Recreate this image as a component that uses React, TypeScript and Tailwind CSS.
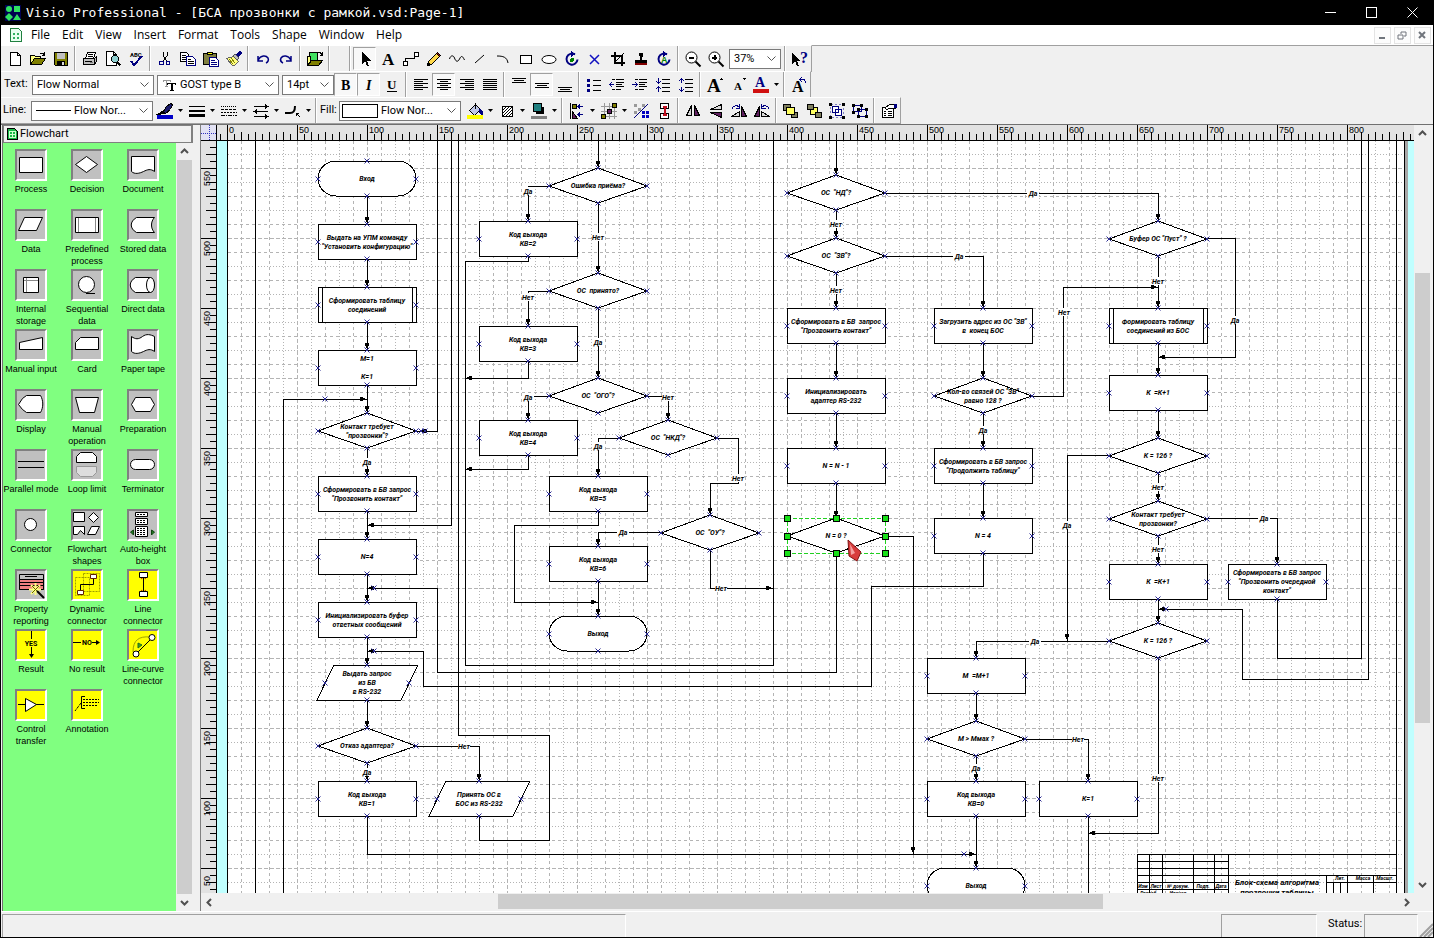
import type { ReactNode } from 'react'
import clsx from 'clsx'

type Shape = 'rect' | 'decision' | 'terminator' | 'predefined' | 'data'

interface FlowNode {
  shape: Shape
  cx: number
  y: number
  text: string[]
}

interface Edge {
  points: string
  arrow?: boolean
}

interface IconProps {
  children: ReactNode
  size?: number
}

const NODE_W = 98
const NODE_H = 35

const nodes: FlowNode[] = [
  { shape: 'terminator', cx: 367, y: 161, text: ['Вход'] },
  { shape: 'rect', cx: 367, y: 224, text: ['Выдать на УПМ команду', '"Установить конфигурацию"'] },
  { shape: 'predefined', cx: 367, y: 287, text: ['Сформировать таблицу', 'соединений'] },
  { shape: 'rect', cx: 367, y: 350, text: ['М=1', '', 'К=1'] },
  { shape: 'decision', cx: 367, y: 413, text: ['Контакт требует', '"прозвонки"?'] },
  { shape: 'rect', cx: 367, y: 476, text: ['Сформировать в БВ запрос', '"Прозвонить контакт"'] },
  { shape: 'rect', cx: 367, y: 539, text: ['N=4'] },
  { shape: 'rect', cx: 367, y: 602, text: ['Инициализировать буфер', 'ответных сообщений'] },
  { shape: 'data', cx: 367, y: 665, text: ['Выдать запрос', 'из БВ', 'в RS-232'] },
  { shape: 'decision', cx: 367, y: 728, text: ['Отказ адаптера?'] },
  { shape: 'rect', cx: 367, y: 781, text: ['Код выхода', 'КВ=1'] },
  { shape: 'data', cx: 479, y: 781, text: ['Принять ОС в', 'БОС из RS-232'] },
  { shape: 'rect', cx: 528, y: 221, text: ['Код выхода', 'КВ=2'] },
  { shape: 'rect', cx: 528, y: 326, text: ['Код выхода', 'КВ=3'] },
  { shape: 'rect', cx: 528, y: 420, text: ['Код выхода', 'КВ=4'] },
  { shape: 'decision', cx: 598, y: 168, text: ['Ошибка приёма?'] },
  { shape: 'decision', cx: 598, y: 273, text: ['ОС  принято?'] },
  { shape: 'decision', cx: 598, y: 378, text: ['ОС  "ОГО"?'] },
  { shape: 'decision', cx: 668, y: 420, text: ['ОС  "НКД"?'] },
  { shape: 'decision', cx: 710, y: 515, text: ['ОС  "ОУ"?'] },
  { shape: 'rect', cx: 598, y: 476, text: ['Код выхода', 'КВ=5'] },
  { shape: 'rect', cx: 598, y: 546, text: ['Код выхода', 'КВ=6'] },
  { shape: 'terminator', cx: 598, y: 616, text: ['Выход'] },
  { shape: 'decision', cx: 836, y: 175, text: ['ОС  "НД"?'] },
  { shape: 'decision', cx: 836, y: 238, text: ['ОС  "ЗВ"?'] },
  { shape: 'rect', cx: 836, y: 308, text: ['Сформировать в БВ  запрос', '"Прозвонить контакт"'] },
  { shape: 'rect', cx: 836, y: 378, text: ['Инициализировать', 'адаптер RS-232'] },
  { shape: 'rect', cx: 836, y: 448, text: ['N = N - 1'] },
  { shape: 'decision', cx: 836, y: 518, text: ['N = 0 ?'] },
  { shape: 'rect', cx: 983, y: 308, text: ['Загрузить адрес из ОС "ЗВ"', 'в  конец БОС'] },
  { shape: 'decision', cx: 983, y: 378, text: ['Кол-во связей ОС "ЗВ"', 'равно 128 ?'] },
  { shape: 'rect', cx: 983, y: 448, text: ['Сформировать в БВ запрос', '"Продолжить таблицу"'] },
  { shape: 'rect', cx: 983, y: 518, text: ['N = 4'] },
  { shape: 'rect', cx: 976, y: 658, text: ['М  =М+1'] },
  { shape: 'decision', cx: 976, y: 721, text: ['М > Ммах ?'] },
  { shape: 'rect', cx: 976, y: 781, text: ['Код выхода', 'КВ=0'] },
  { shape: 'terminator', cx: 976, y: 868, text: ['Выход'] },
  { shape: 'rect', cx: 1088, y: 781, text: ['К=1'] },
  { shape: 'decision', cx: 1158, y: 221, text: ['Буфер ОС "Пуст" ?'] },
  { shape: 'predefined', cx: 1158, y: 308, text: ['Формировать таблицу', 'соединений из БОС'] },
  { shape: 'rect', cx: 1158, y: 375, text: ['К  =К+1'] },
  { shape: 'decision', cx: 1158, y: 438, text: ['К = 126 ?'] },
  { shape: 'decision', cx: 1158, y: 501, text: ['Контакт требует', 'прозвонки?'] },
  { shape: 'rect', cx: 1158, y: 564, text: ['К  =К+1'] },
  { shape: 'decision', cx: 1158, y: 623, text: ['К = 126 ?'] },
  { shape: 'rect', cx: 1277, y: 564, text: ['Сформировать в БВ запрос', '"Прозвонить очередной', 'контакт"'] },
]

const edges: Edge[] = [
  { points: '367,196 367,224', arrow: true },
  { points: '367,259 367,287', arrow: true },
  { points: '367,322 367,350', arrow: true },
  { points: '367,385 367,413', arrow: true },
  { points: '367,448 367,476', arrow: true },
  { points: '367,511 367,539', arrow: true },
  { points: '367,574 367,602', arrow: true },
  { points: '367,637 367,665', arrow: true },
  { points: '367,700 367,728', arrow: true },
  { points: '367,763 367,781', arrow: true },
  { points: '283,900 283,399 367,399', arrow: true },
  { points: '437,130 437,431 420,431', arrow: true },
  { points: '424,431 416,431' },
  { points: '451,130 451,525 367,525', arrow: true },
  { points: '458,130 458,735 549,735 549,840 479,840 479,816' },
  { points: '528,256 528,261 465,261 465,665 773,665 773,130' },
  { points: '528,361 528,378 465,378', arrow: true },
  { points: '528,455 528,469 465,469', arrow: true },
  { points: '836,553 836,672 437,672 437,588 367,588', arrow: true },
  { points: '983,553 983,586 871,586 871,686 423,686 423,651 367,651', arrow: true },
  { points: '598,130 598,168', arrow: true },
  { points: '549,186 528,186 528,221', arrow: true },
  { points: '598,203 598,273', arrow: true },
  { points: '549,291 528,291 528,326', arrow: true },
  { points: '598,308 598,378', arrow: true },
  { points: '549,396 528,396 528,420', arrow: true },
  { points: '647,396 668,396 668,420', arrow: true },
  { points: '619,438 598,438 598,476', arrow: true },
  { points: '717,438 738,438 738,483 710,483 710,515', arrow: true },
  { points: '661,532 598,532 598,546', arrow: true },
  { points: '710,550 710,588 773,588', arrow: true },
  { points: '598,511 598,525 514,525 514,602 598,602', arrow: true },
  { points: '598,581 598,616', arrow: true },
  { points: '416,746 479,746 479,781', arrow: true },
  { points: '367,816 367,854 976,854', arrow: true },
  { points: '836,130 836,175', arrow: true },
  { points: '885,193 1158,193 1158,221', arrow: true },
  { points: '836,210 836,238', arrow: true },
  { points: '885,256 983,256 983,308', arrow: true },
  { points: '836,273 836,308', arrow: true },
  { points: '836,343 836,378', arrow: true },
  { points: '836,413 836,448', arrow: true },
  { points: '836,483 836,518', arrow: true },
  { points: '885,536 913,536 913,854', arrow: true },
  { points: '983,343 983,378', arrow: true },
  { points: '983,413 983,448', arrow: true },
  { points: '983,483 983,518', arrow: true },
  { points: '1032,396 1063,396 1063,287 1158,287', arrow: true },
  { points: '1158,256 1158,308', arrow: true },
  { points: '1207,238 1235,238 1235,357 1158,357', arrow: true },
  { points: '1158,343 1158,375', arrow: true },
  { points: '1158,410 1158,438', arrow: true },
  { points: '1158,473 1158,501', arrow: true },
  { points: '1109,455 1067,455 1067,641', arrow: true },
  { points: '1207,518 1277,518 1277,564', arrow: true },
  { points: '1158,536 1158,564', arrow: true },
  { points: '1158,599 1158,623', arrow: true },
  { points: '1109,641 976,641 976,658', arrow: true },
  { points: '1277,599 1277,658 1361,658 1361,130' },
  { points: '1368,130 1368,679 1242,679 1242,609 1158,609', arrow: true },
  { points: '1158,658 1158,833 1088,833', arrow: true },
  { points: '976,693 976,721', arrow: true },
  { points: '1025,739 1088,739 1088,781', arrow: true },
  { points: '976,756 976,781', arrow: true },
  { points: '976,816 976,868', arrow: true },
  { points: '1088,816 1088,900' },
]

const labels: [string, number, number][] = [
  ['Да', 367, 462], ['Да', 367, 772], ['Да', 528, 191], ['Нет', 598, 237], ['Нет', 528, 297],
  ['Да', 598, 342], ['Да', 528, 397], ['Нет', 668, 397], ['Да', 598, 446], ['Нет', 738, 478],
  ['Да', 623, 532], ['Нет', 721, 588], ['Нет', 464, 746], ['Да', 1033, 193], ['Нет', 836, 224],
  ['Да', 959, 256], ['Нет', 836, 290], ['Да', 983, 430], ['Нет', 1064, 312], ['Нет', 1158, 281],
  ['Да', 1235, 320], ['Нет', 1158, 487], ['Да', 1067, 525], ['Да', 1264, 518], ['Нет', 1158, 549],
  ['Да', 1035, 641], ['Нет', 1158, 778], ['Нет', 1078, 739], ['Да', 976, 768],
]

const looseGlue: [number, number][] = [
  [325, 399], [421, 431], [425, 431], [374, 588], [374, 651], [964, 854], [1166, 609],
]

function range(from: number, to: number, step: number) {
  const out: number[] = []
  for (let n = from; n <= to; n += step) out.push(n)
  return out
}

// 1 mm on the page is 1.4 px at 37%
const mmX = (mm: number) => Math.round(227 + mm * 1.4)
const mmY = (mm: number) => Math.round(168 + (550 - mm) * 1.4)

function gridDash(mm: number) {
  if (mm % 50 === 0) return '4 2'
  return mm % 20 === 0 ? '1 2' : '3 3'
}

function Icon({ children, size = 16 }: IconProps) {
  return (
    <svg
      width={size}
      height={size}
      viewBox={`0 0 ${size} ${size}`}
      fill="none"
      stroke="#000"
      shapeRendering="crispEdges"
      className="shrink-0 overflow-visible"
      aria-hidden="true"
    >
      {children}
    </svg>
  )
}

function Tool({ label, pressed, children }: { label: string; pressed?: boolean; children: ReactNode }) {
  return (
    <button
      type="button"
      aria-label={label}
      className={clsx(
        'flex h-[23px] w-[23px] shrink-0 items-center justify-center',
        pressed && 'border border-r-white border-b-white border-t-[#a0a0a0] border-l-[#a0a0a0] bg-[#f8f8f8]',
      )}
    >
      <Icon>{children}</Icon>
    </button>
  )
}

function DropTool({ label, children }: { label: string; children: ReactNode }) {
  return (
    <div className="flex shrink-0 items-center">
      <Tool label={label}>{children}</Tool>
      <button type="button" aria-label={`${label} options`} className="flex h-[23px] w-[9px] items-center justify-center">
        <svg width="5" height="3" viewBox="0 0 5 3" aria-hidden="true">
          <path d="M0 0h5L2.5 3z" fill="#000" />
        </svg>
      </button>
    </div>
  )
}

function Sep() {
  return (
    <div className="flex h-full w-[6px] shrink-0 justify-center">
      <div className="w-[2px] border-l border-[#a0a0a0] border-r border-r-white" />
    </div>
  )
}

function Combo({ id, label, value, className, children }: {
  id: string
  label: string
  value: string
  className: string
  children?: ReactNode
}) {
  return (
    <div className={clsx('relative flex h-5 shrink-0 items-center border border-[#7a7a7a] bg-white pl-1', className)}>
      {children}
      <select
        id={id}
        aria-label={label}
        defaultValue={value}
        className="min-w-0 flex-1 appearance-none bg-transparent font-['Roboto',sans-serif] text-[11px] leading-4 outline-none"
      >
        <option>{value}</option>
      </select>
      <svg width="9" height="6" viewBox="0 0 9 6" className="mr-1 shrink-0" aria-hidden="true">
        <path d="M.5 .5L4.5 4.5L8.5 .5" fill="none" stroke="#555" />
      </svg>
    </div>
  )
}

function ToolRow({ children }: { children: ReactNode }) {
  return (
    <div className="flex h-[26px] w-fit shrink-0 items-center border-t border-r border-[#a0a0a0] border-t-white pl-[2px] shadow-[0_1px_0_#a0a0a0]">
      {children}
    </div>
  )
}

function StandardRow() {
  return (
    <ToolRow>
      <Tool label="New"><path d="M3.5 1.5h7l3 3v10h-10zM10.500 1.500v3h3" fill="#fff" /></Tool>
      <Tool label="Open">
        <path d="M.5 13.500v-9h4l1 1h5v2" fill="#ffff80" />
        <path d="M.5 13.500l4-6h11l-4 6z" fill="#808000" />
        <path d="M9.500 3.500c1-2 3-2 4.500 0M14.500 1v3h-3" />
      </Tool>
      <Tool label="Save">
        <path d="M1.500 1.500h13v13h-12l-1-1z" fill="#808000" />
        <path d="M4 2h8v6H4z" fill="#c0c0c0" stroke="none" />
        <path d="M4 10h8v4H4z" fill="#000" stroke="none" />
        <path d="M9 11h2v3H9z" fill="#ddd" stroke="none" />
      </Tool>
      <Sep />
      <Tool label="Print">
        <path d="M5.500 1.500h8l-2 6h-8z" fill="#fff" />
        <path d="M1.500 7.500h11v6h-11zM12.500 7.500l2-2v5l-2 3" fill="#c0c0c0" />
        <path d="M6 3.500h5M5.500 5.500h5M3 10.500h7" />
        <path d="M8 11h3v1H8z" fill="#777" stroke="none" />
      </Tool>
      <Tool label="Print preview">
        <path d="M1.500 .5h7l3 3v11h-10zM8.500 .5v3h3" fill="#fff" />
        <circle cx="10" cy="8" r="3.500" fill="#8fd0d0" />
        <path d="M12 11l3.500 3.500" strokeWidth="2" />
      </Tool>
      <Tool label="Spelling">
        <text x="2" y="6" className="fill-black stroke-none font-['Roboto'] text-[6px] font-bold">ABC</text>
        <path d="M3 10l3 4 8-9" stroke="#000080" strokeWidth="2" />
      </Tool>
      <Sep />
      <Tool label="Cut">
        <path d="M6 1v4l4 5M10 1v4l-4 5" />
        <circle cx="4.500" cy="12" r="2" stroke="#000080" />
        <circle cx="11" cy="12" r="2" stroke="#000080" />
      </Tool>
      <Tool label="Copy">
        <path d="M.5 1.500h6l2 2v7h-8z" fill="#fff" />
        <path d="M2 4.500h4M2 6.500h5M2 8.500h5" />
        <path d="M6.500 5.500h6l3 3v6h-9z" fill="#fff" stroke="#000080" />
        <path d="M8 8.500h3M8 10.500h6M8 12.500h6" />
      </Tool>
      <Tool label="Paste">
        <path d="M.5 2.500h13v11H.5z" fill="#808040" />
        <path d="M4.500 3.500v-2h5v2z" fill="#ff0" />
        <path d="M6.500 6.500h6l3 3v6h-9z" fill="#fff" stroke="#000080" />
        <path d="M8 9.500h4M8 11.500h6M8 13.500h6" stroke="#000080" />
      </Tool>
      <Tool label="Format painter">
        <path d="M.5 7.500l7-2 5 5-4 4h-2z" fill="#ffff80" stroke="#666" />
        <path d="M7 5l2-2 4 4-2 2z" fill="#c0c0c0" stroke="#555" />
        <path d="M11 5l4-4" stroke="#000080" strokeWidth="3" />
        <path d="M3 8l4 5M5 7l4 5" stroke="#808000" />
      </Tool>
      <Sep />
      <Tool label="Undo"><path d="M3 5v5h5M3 9c3-5 8-5 10-2 1 2 0 4-2 5" stroke="#000080" strokeWidth="1.500" shapeRendering="auto" /></Tool>
      <Tool label="Redo"><path d="M13 5v5H8M13 9c-3-5-8-5-10-2-1 2 0 4 2 5" stroke="#000080" strokeWidth="1.500" shapeRendering="auto" /></Tool>
      <Sep />
      <Tool label="Open stencil">
        <path d="M2.500 1.500h8v8h-8z" fill="#40e060" />
        <path d="M.5 14.500v-9h3v5z" fill="#ffff80" />
        <path d="M.5 14.500l4-5h11l-4 5z" fill="#808000" />
        <path d="M11 2c2-1 3 0 4 2M15.500 1v3h-3" />
      </Tool>
      <Sep />
      <div className="w-[15px]" />
      <Sep />
      <Tool label="Pointer" pressed><path d="M5 1v12l3-3 2 5h2l-2-5h4z" fill="#000" stroke="none" /></Tool>
      <Tool label="Text"><text x="2" y="14" className="fill-black stroke-none font-['Liberation_Serif'] text-[17px] font-bold">A</text></Tool>
      <Tool label="Connector">
        <path d="M.5 10.500h4v4h-4zM11.500 1.500h4v4h-4z" fill="#fff" />
        <path d="M2.500 10V7.500h9V3.500" />
      </Tool>
      <Tool label="Pencil">
        <path d="M1.500 14.500l1-4 8-8 3 3-8 8z" fill="#ffd84a" />
        <path d="M10.500 2.500l1-1 3 3-1 1z" fill="#a01010" />
        <path d="M1.500 14.500l1-3 2 2z" fill="#000" />
      </Tool>
      <Tool label="Freeform"><path d="M.5 8c1-4 4-4 5-1s3 5 5 1 3-3 5 1" shapeRendering="auto" /></Tool>
      <Tool label="Line"><path d="M3 12L12 4" shapeRendering="auto" /></Tool>
      <Tool label="Arc"><path d="M2 5c6 0 10 1 11 7" shapeRendering="auto" /></Tool>
      <Tool label="Rectangle"><path d="M2.500 4.500h11v8h-11z" fill="#fff" /></Tool>
      <Tool label="Ellipse"><ellipse cx="8" cy="8.500" rx="7" ry="4" fill="#fff" shapeRendering="auto" /></Tool>
      <Tool label="Rotate">
        <path d="M11 3.500a5.500 5.500 0 1 0 2.500 5" stroke="#000080" strokeWidth="2" shapeRendering="auto" />
        <path d="M7 0l5 3-5 3z" fill="#000080" stroke="none" />
        <circle cx="8" cy="9" r="2" fill="#008000" stroke="none" />
      </Tool>
      <Tool label="Connection point"><path d="M3 4l9 9M12 4l-9 9" stroke="#1010c0" strokeWidth="1.500" shapeRendering="auto" /></Tool>
      <Tool label="Crop">
        <path d="M4.500 1v10.500H15M1 4.500h10.500V15" strokeWidth="2" />
        <path d="M6 10l8-8" />
      </Tool>
      <Tool label="Stamp">
        <path d="M6 2h4v3l-1 1v3h5v3H2V9h5V6L6 5z" fill="#000" stroke="none" />
        <path d="M2 12h12v2H2z" fill="#800000" stroke="none" />
      </Tool>
      <Tool label="Rotate text">
        <path d="M11 3.500a5.500 5.500 0 1 0 2.500 5" stroke="#000080" strokeWidth="2" shapeRendering="auto" />
        <path d="M7 0l5 3-5 3z" fill="#000080" stroke="none" />
        <text x="5" y="12" className="fill-[#008000] stroke-none font-['Liberation_Sans'] text-[9px] font-bold">A</text>
      </Tool>
      <Sep />
      <Tool label="Zoom out">
        <circle cx="6.500" cy="6.500" r="5.500" fill="#fff" shapeRendering="auto" />
        <path d="M4 6.500h5" strokeWidth="2" />
        <path d="M10.500 10.500l5 5" strokeWidth="2" shapeRendering="auto" />
      </Tool>
      <Tool label="Zoom in">
        <circle cx="6.500" cy="6.500" r="5.500" fill="#fff" shapeRendering="auto" />
        <path d="M4 6.500h5M6.500 4v5" strokeWidth="2" />
        <path d="M10.500 10.500l5 5" strokeWidth="2" shapeRendering="auto" />
      </Tool>
      <Combo id="zoom" label="Zoom" value="37%" className="mr-px ml-[2px] w-[52px]" />
      <Sep />
      <Tool label="Help">
        <path d="M0 1v12l3-3 2 5h2l-2-5h3z" fill="#000" stroke="none" />
        <text x="8" y="12" className="fill-[#000080] stroke-none font-['Liberation_Serif'] text-[16px] font-bold">?</text>
      </Tool>
    </ToolRow>
  )
}

function TextRow() {
  return (
    <ToolRow>
      <label htmlFor="text-style" className="w-[29px] pl-px text-[11px]">Text:</label>
      <Combo id="text-style" label="Text style" value="Flow Normal" className="w-[122px]" />
      <Combo id="font" label="Font" value="GOST type B" className="ml-[3px] w-[122px]">
        <svg width="14" height="12" viewBox="0 0 14 12" className="mr-1 shrink-0" shapeRendering="crispEdges" aria-hidden="true">
          <path d="M1.500 3V1.500h7V3M4.500 1v6M3 7.500h3" stroke="#999" fill="none" />
          <path d="M5.500 6V4.500h8V6M8 11.500h4" stroke="#000" fill="none" />
          <path d="M9 4h2v7H9z" />
        </svg>
      </Combo>
      <Combo id="size" label="Font size" value="14pt" className="ml-[3px] w-[52px]" />
      <Tool label="Bold" pressed><text x="3" y="13" className="fill-black stroke-none font-['Liberation_Serif'] text-[14px] font-bold">B</text></Tool>
      <Tool label="Italic" pressed><text x="5" y="13" className="fill-black stroke-none font-['Liberation_Serif'] text-[14px] font-bold italic">I</text></Tool>
      <Tool label="Underline">
        <text x="3" y="12" className="fill-black stroke-none font-['Liberation_Serif'] text-[13px] font-bold">U</text>
        <path d="M3 14.500h10" />
      </Tool>
      <Sep />
      <Tool label="Align left"><path d="M1 2.500h14M1 4.500h9M1 6.500h14M1 8.500h9M1 10.500h14M1 12.500h9" /></Tool>
      <Tool label="Align centre" pressed><path d="M1 2.500h14M4 4.500h8M1 6.500h14M4 8.500h8M1 10.500h14M4 12.500h8" /></Tool>
      <Tool label="Align right"><path d="M1 2.500h14M6 4.500h9M1 6.500h14M6 8.500h9M1 10.500h14M6 12.500h9" /></Tool>
      <Tool label="Justify"><path d="M1 2.500h14M1 4.500h14M1 6.500h14M1 8.500h14M1 10.500h14M1 12.500h14" /></Tool>
      <Sep />
      <Tool label="Align top"><path d="M1 1.500h14M3 3.500h10M1 5.500h14" /></Tool>
      <Tool label="Align middle" pressed><path d="M1 6.500h14M3 8.500h10M1 10.500h14" /></Tool>
      <Tool label="Align bottom"><path d="M1 10.500h14M3 12.500h10M1 14.500h14" /></Tool>
      <Sep />
      <Tool label="Bullets">
        <path d="M1 2h3v3H1zM1 7h3v3H1zM1 12h3v3H1z" fill="#000080" stroke="none" />
        <path d="M7 3.500h8M7 8.500h8M7 13.500h8" />
      </Tool>
      <Tool label="Decrease indent">
        <path d="M0 7.500h5M3 5L.5 7.500 3 10" stroke="#000080" />
        <path d="M7 2.500h8M7 5.500h8M7 7.500h6M7 9.500h8M7 12.500h5M3 2.500h3M3 12.500h3" />
      </Tool>
      <Tool label="Increase indent">
        <path d="M0 7.500h5M3 5l2.500 2.500L3 10" stroke="#000080" />
        <path d="M7 2.500h8M7 5.500h8M7 7.500h6M7 9.500h8M7 12.500h5M3 2.500h3M3 12.500h3" />
      </Tool>
      <Tool label="Decrease spacing">
        <path d="M3.500 1v5M1 4l2.500 2.500L6 4M3.500 15v-5M1 12l2.500-2.500L6 12" stroke="#000080" />
        <path d="M7 2.500h8M7 6.500h8M7 10.500h8M7 14.500h8" />
      </Tool>
      <Tool label="Increase spacing">
        <path d="M3.500 1v5M1 4l2.500-2.500L6 4M3.500 15v-5M1 12l2.500 2.500L6 12" stroke="#000080" />
        <path d="M7 2.500h8M7 6.500h8M7 10.500h8M7 14.500h8" />
      </Tool>
      <Sep />
      <Tool label="Larger text">
        <text x="0" y="15" className="fill-black stroke-none font-['Liberation_Serif'] text-[19px] font-bold">A</text>
        <path d="M12 3l2-2 2 2z" fill="#000" stroke="none" />
      </Tool>
      <Tool label="Smaller text">
        <text x="4" y="13" className="fill-black stroke-none font-['Liberation_Serif'] text-[11px] font-bold">A</text>
        <path d="M12 1h4l-2 2z" fill="#000" stroke="none" />
      </Tool>
      <DropTool label="Text colour">
        <text x="2" y="10" className="fill-[#000080] stroke-none font-['Liberation_Serif'] text-[14px] font-bold">A</text>
        <path d="M0 12h16v4H0z" fill="#d01010" stroke="none" />
      </DropTool>
      <Sep />
      <Tool label="Rotate text left">
        <text x="1" y="15" className="fill-black stroke-none font-['Liberation_Serif'] text-[16px] font-bold">A</text>
        <path d="M9 2.500h4l2 3M11 0L8.500 2.500 11 5" stroke="#000080" />
      </Tool>
    </ToolRow>
  )
}

function ShapeRow() {
  return (
    <ToolRow>
      <label htmlFor="line-style" className="w-[28px] text-[11px]">Line:</label>
      <Combo id="line-style" label="Line style" value="Flow Nor..." className="w-[122px]">
        <div className="mr-[3px] h-px w-[35px] bg-black" />
      </Combo>
      <DropTool label="Line colour">
        <path d="M6.500 8.500l3-5 4-3 2 1-2 5-5 4z" fill="#1a1a6a" />
        <path d="M1 11l5-3 2 2-4 1z" fill="#000" />
        <path d="M0 12h16v4H0z" fill="#0000c8" stroke="none" />
      </DropTool>
      <DropTool label="Line weight">
        <path d="M0 3.500h16" />
        <path d="M0 7h16v2H0zM0 11h16v3H0z" fill="#000" stroke="none" />
      </DropTool>
      <DropTool label="Line pattern">
        <path d="M0 3.500h16" strokeDasharray="1 1" />
        <path d="M0 6.500h16" strokeDasharray="3 1" />
        <path d="M0 9.500h16" strokeDasharray="2 1" />
        <path d="M0 12.500h16" strokeDasharray="4 1 1 1" />
      </DropTool>
      <DropTool label="Line ends">
        <path d="M1 3.500h13M2 8.500h13M1 13.500h13" />
        <path d="M12 1l4 2.500L12 6zM4 6L0 8.500 4 11zM12 11l4 2.500-4 2.500z" fill="#000" stroke="none" />
      </DropTool>
      <DropTool label="Corner rounding">
        <path d="M0 10h5c3 0 5-1 5-7" strokeWidth="2" shapeRendering="auto" />
        <path d="M11 10l4 4M11 10v3M11 10h3" />
      </DropTool>
      <Sep />
      <label htmlFor="fill-style" className="w-[20px] pl-px text-[11px]">Fill:</label>
      <Combo id="fill-style" label="Fill style" value="Flow Nor..." className="w-[122px]">
        <div className="mr-[3px] -ml-[2px] h-[14px] w-[36px] border border-black bg-white" />
      </Combo>
      <div className="w-[2px]" />
      <DropTool label="Fill colour">
        <path d="M2.500 7.500l6-6 5 5-6 6z" fill="#c0c8e8" />
        <path d="M12 6c3 1 4 3 3 6l-3-4z" fill="#000080" stroke="#000080" />
        <path d="M8 6V0" />
        <path d="M0 12h16v4H0z" fill="#ffff00" stroke="none" />
      </DropTool>
      <DropTool label="Fill pattern">
        <path d="M3.500 3.500h10v10h-10z" fill="#fff" />
        <path d="M4 7l3-3M4 10l6-6M4 13l9-9M7 13l6-6M10 13l3-3" shapeRendering="auto" />
      </DropTool>
      <DropTool label="Shadow">
        <path d="M5 4h8v7H5z" fill="#000" stroke="none" />
        <path d="M2.500 .5h8v8h-8z" fill="#208080" />
        <path d="M0 13h16v3H0z" fill="#808080" stroke="none" />
      </DropTool>
      <Sep />
      <DropTool label="Align shapes">
        <path d="M1.500 0v16" />
        <path d="M3.500 1.500h4v4h-4z" fill="#808000" />
        <path d="M3 8l5 7H3z" fill="#602060" stroke="#000" />
        <path d="M9 3.500h5M9 11.500h5M11 1.500L9 3.500l2 2M11 9.500l-2 2 2 2" stroke="#000080" />
      </DropTool>
      <DropTool label="Distribute shapes">
        <path d="M3.500 0v16M8.500 0v16M13.500 0v16M0 3.500h16M0 8.500h16M0 13.500h16" stroke="#999" />
        <path d="M11.500 .5h4v4h-4zM.5 11.500h4v4h-4z" fill="#808000" />
        <path d="M6.500 6.500h4v4h-4z" fill="#602060" />
      </DropTool>
      <Tool label="Lay out shapes">
        <path d="M1 1h3v3H1zM5 5h3v3H5zM1 8h3v3H1zM9 1h3v3H9z" fill="#999" stroke="none" />
        <path d="M1 15L15 1" stroke="#000080" />
        <path d="M9 8h3v3H9zM13 8h3v3h-3zM9 12h3v3H9zM13 12h3v3h-3z" fill="#0000c0" stroke="none" />
      </Tool>
      <Tool label="Connect shapes">
        <path d="M4.500 .5h8v5h-8zM4.500 10.500h8v5h-8z" fill="#fff" />
        <path d="M8.500 4v8M6.500 4h4M6.500 12h4" stroke="#c01020" strokeWidth="2" />
      </Tool>
      <Sep />
      <Tool label="Flip horizontal">
        <path d="M6.500 2.500v10h-5z" fill="#d8d8d8" />
        <path d="M9.500 2.500v10h5z" fill="#602060" />
      </Tool>
      <Tool label="Flip vertical">
        <path d="M13.500 1.500v5h-11z" fill="#d8d8d8" />
        <path d="M13.500 14.500v-5h-11z" fill="#602060" />
      </Tool>
      <Tool label="Rotate right">
        <path d="M8.500 13.500h-8l8-5z" fill="#d8d8d8" />
        <path d="M10.500 3.500v10h5z" fill="#602060" />
        <path d="M1 6c1-4 5-4 7-2M8.500 1v4h-4" stroke="#000080" />
      </Tool>
      <Tool label="Rotate left">
        <path d="M7.500 13.500h8l-8-5z" fill="#d8d8d8" />
        <path d="M5.500 3.500v10h-5z" fill="#602060" />
        <path d="M15 6c-1-4-5-4-7-2M7.500 1v4h4" stroke="#000080" />
      </Tool>
      <Sep />
      <Tool label="Bring to front">
        <path d="M.5 1.500h7v6h-7zM8.500 9.500h6v5h-6z" fill="#808060" />
        <path d="M3.500 4.500h8v7h-8z" fill="#ffff60" />
      </Tool>
      <Tool label="Send to back">
        <path d="M4.500 4.500h7v7h-7z" fill="#ffff60" />
        <path d="M1.500 1.500h6v5h-6zM9.500 9.500h6v5h-6z" fill="#808060" />
      </Tool>
      <Tool label="Group">
        <path d="M3.500 3.500h6v6h-6zM6.500 6.500h6v6h-6z" fill="#fff" stroke="#000080" />
        <path d="M1.500 1.500h13v13h-13z" stroke="#8080c0" strokeDasharray="2 2" />
        <path d="M0 0h3v3H0zM13 0h3v3h-3zM0 13h3v3H0zM13 13h3v3h-3z" fill="#000" stroke="none" />
      </Tool>
      <Tool label="Ungroup">
        <path d="M1.500 2.500h8v6h-8zM6.500 6.500h8v7h-8z" stroke="#000080" />
        <path d="M0 1h3v3H0zM8 1h3v3H8zM0 8h3v3H0zM5 5h3v3H5zM13 5h3v3h-3zM5 12h3v3H5zM13 12h3v3h-3z" fill="#000" stroke="none" />
      </Tool>
      <Sep />
      <Tool label="Properties">
        <path d="M1.500 4.500h11v10h-11z" fill="#fff" />
        <path d="M3 8.500h2M7 8.500h4M3 10.500h2M7 10.500h4M3 12.500h2M7 12.500h4" />
        <path d="M4 5l4-3 6-1 1 4-4 1-3-1-2 2z" fill="#fff" />
        <path d="M13 1h3v4h-3z" fill="#000080" stroke="none" />
      </Tool>
    </ToolRow>
  )
}

const stencils: { name: string; tint?: 'yellow'; art: ReactNode }[] = [
  { name: 'Process', art: <path d="M4.500 8.500h23v15h-23z" /> },
  { name: 'Decision', art: <path d="M4.500 15.500l11-8 11 8-11 8z" /> },
  { name: 'Document', art: <path d="M4.500 7.500h23v15c-4-3-7-2-11 0s-9 3-12 0z" /> },
  { name: 'Data', art: <path d="M3.500 21.500l6-13h18l-6 13z" /> },
  { name: 'Predefined\nprocess', art: <><path d="M4.500 8.500h23v15h-23z" /><path d="M7.500 9v14M24.500 9v14" stroke="#888" /></> },
  { name: 'Stored data', art: <path d="M9.500 8.500h18c-4 4-4 11 0 15h-18c-7-4-7-11 0-15z" /> },
  { name: 'Internal\nstorage', art: <><path d="M8.500 8.500h15v15h-15z" /><path d="M11.500 9v14M9 11.500h14" stroke="#888" /></> },
  { name: 'Sequential\ndata', art: <><circle cx="15.500" cy="15.500" r="8" /><path d="M15 24.500h9" /></> },
  { name: 'Direct data', art: <><path d="M8.500 8.500h15c5 4 5 11 0 15h-15c-7-4-7-11 0-15z" /><ellipse cx="23.500" cy="16" rx="4" ry="7.500" /></> },
  { name: 'Manual input', art: <path d="M4.500 13.500l23-5v12h-23z" /> },
  { name: 'Card', art: <path d="M4.500 13.500l5-5h18v12h-23z" /> },
  { name: 'Paper tape', art: <path d="M4.500 7.500c4 3 7 3 11 0s8-2 12 0v15c-4-3-7-2-11 0s-9 3-12 0z" /> },
  { name: 'Display', art: <path d="M3.500 15.500l4-6 4-3h14c3 5 3 12 0 17h-14l-4-3z" /> },
  { name: 'Manual\noperation', art: <path d="M4.500 8.500h23l-4 15h-15z" /> },
  { name: 'Preparation', art: <path d="M4.500 15.500l4-7h15l4 7-4 7h-15z" /> },
  { name: 'Parallel mode', art: <path d="M3 12.500h26M3 18.500h26" /> },
  { name: 'Loop limit', art: <><path d="M5.500 13.500v-6l4-4h12l4 4v6z" /><path d="M5.500 17.500h20v6l-4 4h-12l-4-4z" fill="#ddd" stroke="#999" /></> },
  { name: 'Terminator', art: <rect x="3.500" y="10.500" width="24" height="10" rx="5" /> },
  { name: 'Connector', art: <circle cx="15.500" cy="15.500" r="6" /> },
  {
    name: 'Flowchart\nshapes',
    art: <><path d="M2.500 3.500h11v9h-11zM17.500 8.500l5-5 5 5-5 5zM2.500 17.500h11v8l-4-4-3 4h-4zM16.500 25.500l4-8h8l-4 8z" /></>,
  },
  {
    name: 'Auto-height\nbox',
    art: (
      <>
        <path d="M8.500 3.500h12v4h-12zM8.500 9.500h12v6h-12zM8.500 17.500h12v10h-12z" />
        <path d="M10 5.500h9M10 11.500h9M10 13.500h9M10 19.500h9M10 21.500h9M10 23.500h9M10 25.500h9" strokeDasharray="2 1" />
        <path d="M6.500 21v5l-3-3zM24.500 21v5l3-3z" fill="#208020" stroke="#104010" />
      </>
    ),
  },
  {
    name: 'Property\nreporting',
    art: (
      <>
        <path d="M4.500 5.500h24v15h-24z" fill="#c0c0c0" />
        <path d="M4.500 10.500h24v10h-24z" fill="#f08080" />
        <path d="M10 7.500h12M5 13.500h23M5 16.500h23" />
        <path d="M16 16l9 9M25 16l-9 9M20.500 14v12M14 20.500h12" stroke="#ffff80" strokeWidth="2" />
        <path d="M17 17l7 7M24 17l-7 7" stroke="#606000" />
        <path d="M22 22l7 7" strokeWidth="2" />
      </>
    ),
  },
  {
    name: 'Dynamic\nconnector',
    tint: 'yellow',
    art: (
      <>
        <path d="M4.500 8.500h14v18h-14zM12.500 4.500h16v18h-16z" fill="none" stroke="#a0a000" strokeDasharray="2 1" />
        <path d="M9.500 21v-5.500h13V10" fill="none" />
        <path d="M19.500 5.500h6v4h-6zM6.500 21.500h6v4h-6z" stroke="#602000" />
      </>
    ),
  },
  {
    name: 'Line\nconnector',
    tint: 'yellow',
    art: (
      <>
        <path d="M16.500 8v15" />
        <path d="M14 10l2.500-2 2.500 2M14 21l2.500 2 2.500-2" stroke="#c03000" fill="none" />
        <path d="M12.500 3.500h8v5h-8zM12.500 22.500h8v5h-8z" />
      </>
    ),
  },
  {
    name: 'Result',
    tint: 'yellow',
    art: (
      <>
        <path d="M16.500 2v8M16.500 18v8" />
        <path d="M14 25h5l-2.500 4z" fill="#000" stroke="none" />
        <text x="16" y="17" textAnchor="middle" className="fill-black stroke-none font-['Roboto'] text-[7px] font-bold">YES</text>
      </>
    ),
  },
  {
    name: 'No result',
    tint: 'yellow',
    art: (
      <>
        <path d="M2 13.500h8M21 13.500h5" />
        <path d="M25 11v5l4-2.500z" fill="#000" stroke="none" />
        <text x="16" y="16" textAnchor="middle" className="fill-black stroke-none font-['Roboto'] text-[7px] font-bold">NO</text>
      </>
    ),
  },
  {
    name: 'Line-curve\nconnector',
    tint: 'yellow',
    art: (
      <>
        <path d="M6 23c0-12 6-16 17-15" stroke="#a0a000" fill="none" />
        <path d="M11 14l4 2-4 3z" fill="#40a020" stroke="#207020" />
        <path d="M9 25L25 9" />
        <circle cx="25" cy="8.500" r="3" />
        <circle cx="9" cy="25" r="3" />
      </>
    ),
  },
  { name: 'Control\ntransfer', tint: 'yellow', art: <><path d="M3 15.500h26" /><path d="M10.500 9.500l11 6-11 7z" /></> },
  {
    name: 'Annotation',
    tint: 'yellow',
    art: (
      <>
        <path d="M14 7.500h-3.500v12H14" fill="none" />
        <path d="M10 14L4 22" fill="none" strokeDasharray="3 1" />
        <path d="M12 10.500h16M12 13.500h16M12 16.500h15" strokeDasharray="2 1" />
      </>
    ),
  },
]

function ScrollButton({ label, d }: { label: string; d: string }) {
  return (
    <button type="button" aria-label={label} className="flex h-[17px] w-[17px] shrink-0 items-center justify-center">
      <svg width="9" height="9" viewBox="0 0 9 9" fill="none" stroke="#505050" strokeWidth="2" aria-hidden="true">
        <path d={d} />
      </svg>
    </button>
  )
}

function StencilPanel() {
  return (
    <aside className="flex w-[191px] shrink-0 flex-col border-l border-[#707070]">
      <h2 className="flex h-[18px] shrink-0 items-center gap-[2px] border border-r-2 border-[#808080] pl-[3px] text-[11px] leading-4">
        <svg width="11" height="12" viewBox="0 0 11 12" shapeRendering="crispEdges" aria-hidden="true">
          <path d="M.5 .5h7l3 3v8H.5z" fill="#18b848" stroke="#000" />
          <path d="M2 6h7M5.500 3v7M2.500 3.500h6v6h-6z" fill="none" stroke="#d0ffd0" />
        </svg>
        Flowchart
      </h2>
      <div className="flex min-h-0 flex-1">
        <ul className="grid flex-1 auto-rows-[60px] grid-cols-[56px_56px_56px] content-start bg-[#80ff80] pt-[6px]">
          {stencils.map((s) => (
            <li key={s.name} className="flex flex-col items-center">
              <div
                className={clsx(
                  'h-8 w-8 shrink-0 border-2 border-t-[#808080] border-r-white border-b-white border-l-[#808080]',
                  s.tint === 'yellow' ? 'bg-[#ffff00]' : 'bg-[#c0c0c0]',
                )}
              >
                <svg width="32" height="32" viewBox="0 0 32 32" fill="#fff" stroke="#000" className="-mt-[2px] -ml-[2px]" aria-hidden="true">
                  {s.art}
                </svg>
              </div>
              <span className="mt-[2px] text-center font-['Liberation_Sans',Arial,sans-serif] text-[9px] leading-3 whitespace-pre">
                {s.name}
              </span>
            </li>
          ))}
        </ul>
        <div className="flex w-[17px] flex-col bg-[#f0f0f0]">
          <ScrollButton label="Scroll up" d="M1 6l3.500-3.500L8 6" />
          <div className="mx-px flex-1 bg-[#cdcdcd]" />
          <ScrollButton label="Scroll down" d="M1 3l3.500 3.500L8 3" />
        </div>
      </div>
    </aside>
  )
}

function TopRuler() {
  return (
    <svg className="h-4 min-w-0 flex-1 border-b border-black bg-[#e2e2e2]" shapeRendering="crispEdges" aria-hidden="true">
      <g transform="translate(-217 0)">
        {range(-5, 1200, 5).map((mm) => (
          <rect key={mm} x={mmX(mm)} y={mm % 50 === 0 ? 0 : mm % 10 === 0 ? 7 : 9} width="1" height="15" />
        ))}
        {range(0, 800, 50).map((mm) => (
          <text key={mm} x={mmX(mm) + 2} y="8" className="font-['Liberation_Sans'] text-[9px]">{mm}</text>
        ))}
      </g>
    </svg>
  )
}

function LeftRuler() {
  return (
    <svg className="h-full w-4 shrink-0 border-r border-black bg-[#e2e2e2]" shapeRendering="crispEdges" aria-hidden="true">
      <g transform="translate(0 -141)">
        {range(-300, 565, 5).map((mm) => (
          <rect key={mm} x={mm % 50 === 0 ? 0 : mm % 10 === 0 ? 5 : 9} y={mmY(mm)} width="16" height="1" />
        ))}
        {range(50, 550, 50).map((mm) => (
          <text
            key={mm}
            transform={`translate(9 ${mmY(mm) + 18}) rotate(-90)`}
            className="font-['Liberation_Sans'] text-[9px]"
          >
            {mm}
          </text>
        ))}
      </g>
    </svg>
  )
}

function Glue({ x, y }: { x: number; y: number }) {
  return <path d={`M${x - 2.5} ${y - 2.5}l5 5M${x + 2.5} ${y - 2.5}l-5 5`} className="stroke-[#2c2c94]" shapeRendering="auto" />
}

function outline({ shape, cx, y }: FlowNode) {
  const l = cx - NODE_W / 2
  const r = cx + NODE_W / 2
  const b = y + NODE_H
  const m = y + 18
  switch (shape) {
    case 'decision':
      return `M${l} ${m}L${cx} ${y}L${r} ${m}L${cx} ${b}Z`
    case 'terminator':
      return `M${l + 18} ${y}H${r - 18}A18 17.500 0 0 1 ${r - 18} ${b}H${l + 18}A18 17.500 0 0 1 ${l + 18} ${y}Z`
    case 'data':
      return `M${cx - 33} ${y}H${cx + 51}L${cx + 34} ${b}H${cx - 50}Z`
    case 'predefined':
      return `M${l} ${y}H${r}V${b}H${l}ZM${l + 4} ${y}V${b}M${r - 4} ${y}V${b}`
    default:
      return `M${l} ${y}H${r}V${b}H${l}Z`
  }
}

function NodeView({ node }: { node: FlowNode }) {
  const { cx, y, text, shape } = node
  const half = shape === 'data' ? 42 : NODE_W / 2
  const first = y + 20 - (text.length - 1) * 4.5
  return (
    <g>
      <path d={outline(node)} className="fill-white stroke-black" />
      {text.map((line, i) => (
        <text key={i} x={cx} y={first + i * 9} textAnchor="middle" className="whitespace-pre">{line}</text>
      ))}
      <Glue x={cx} y={y} />
      <Glue x={cx} y={y + NODE_H} />
      <Glue x={cx - half} y={y + 18} />
      <Glue x={cx + half} y={y + 18} />
    </g>
  )
}

function TitleBlock() {
  return (
    <g>
      <path
        d="M1137 900V854H1396M1137 861H1228M1137 868H1228M1137 875H1396M1137 882H1228M1137 889H1228M1149 854V900M1162 854V900M1193 854V900M1214 854V900M1228 854V900M1326 875V900M1347 875V900M1373 875V900M1326 882H1396M1333 882V900M1340 882V900"
        className="fill-none stroke-black"
      />
      <g textAnchor="middle" className="text-[5px]">
        <text x="1143" y="888">Изм</text>
        <text x="1156" y="888">Лист</text>
        <text x="1178" y="888">№ докум.</text>
        <text x="1203" y="888">Подп.</text>
        <text x="1221" y="888">Дата</text>
        <text x="1149" y="895">Разраб.</text>
        <text x="1178" y="895">Иванов</text>
        <text x="1340" y="880">Лит.</text>
        <text x="1363" y="880">Масса</text>
        <text x="1385" y="880">Масшт.</text>
      </g>
      <g textAnchor="middle" className="text-[8px]">
        <text x="1277" y="885">Блок-схема алгоритма</text>
        <text x="1277" y="895">прозвонки таблицы</text>
      </g>
    </g>
  )
}

function Drawing() {
  const handles = [787, 836, 885].flatMap((x) => [518, 536, 553].map((y) => [x, y])).filter(([x, y]) => !(x === 836 && y === 536))
  return (
    <svg className="min-w-0 flex-1 bg-[#c0ffff]" shapeRendering="crispEdges" role="img" aria-label="Page-1">
      <defs>
        <marker id="arrow" markerUnits="userSpaceOnUse" markerWidth="6" markerHeight="6" refX="7" refY="2.500" orient="auto">
          <path d="M0 0L5 1.500V3.500L0 5z" />
        </marker>
      </defs>
      <g transform="translate(-217 -141)" className="font-['Roboto'] text-[7px] font-bold italic">
        <path d="M1404 130h4v800h-4z" className="fill-[#a8a8a8]" />
        <path d="M227 130h1177v800H227z" className="fill-white" />
        <g className="stroke-[#b4b4b4]">
          {range(10, 830, 10).map((mm) => (
            <path key={mm} d={`M${mmX(mm)} 141V900`} strokeDasharray={gridDash(mm)} />
          ))}
          {range(40, 560, 10).map((mm) => (
            <path key={mm} d={`M228 ${mmY(mm)}H1404`} strokeDasharray={gridDash(mm)} />
          ))}
        </g>
        <path d="M227 130V900M255 130V900M1396 130V900M1404 130V900" className="stroke-black" />
        {edges.map((e) => (
          <polyline key={e.points} points={e.points} className="fill-none stroke-black" markerEnd={e.arrow ? 'url(#arrow)' : undefined} />
        ))}
        <TitleBlock />
        {nodes.map((n) => (
          <NodeView key={`${n.cx}-${n.y}`} node={n} />
        ))}
        {labels.map(([text, x, y]) => (
          <g key={`${x}-${y}`}>
            <rect x={x - 6} y={y - 4} width="12" height="8" className="fill-white" />
            <text x={x} y={y + 3} textAnchor="middle">{text}</text>
          </g>
        ))}
        {looseGlue.map(([x, y]) => (
          <Glue key={`${x}-${y}`} x={x} y={y} />
        ))}
        <path d="M787 518H885V553H787Z" className="fill-none stroke-white" />
        <path d="M787 518H885V553H787Z" className="fill-none stroke-[#20d020]" strokeDasharray="4 2" />
        {handles.map(([x, y]) => (
          <rect key={`${x}-${y}`} x={x - 3} y={y - 3} width="6" height="6" className="fill-[#18e018] stroke-black" />
        ))}
        <g shapeRendering="auto">
          <path d="M848 540L861 552L857 561L849 556Z" className="fill-[#d83c3c] stroke-[#801010]" />
          <path d="M850 544L855 553L851 555Z" className="fill-[#f4a0a0]" />
        </g>
      </g>
    </svg>
  )
}

function Workspace() {
  return (
    <main className="flex min-w-0 flex-1 flex-col border-l border-[#808080]">
      <div className="flex min-h-0 flex-1">
        <div className="flex min-w-0 flex-1 flex-col">
          <div className="flex">
            <svg width="16" height="16" className="shrink-0 border-r border-b border-black bg-[#e2e2f4]" shapeRendering="crispEdges" aria-hidden="true">
              <path d="M8.500 0v16M0 8.500h16" stroke="#3030c0" strokeDasharray="1 1" />
            </svg>
            <TopRuler />
          </div>
          <div className="flex min-h-0 flex-1">
            <LeftRuler />
            <Drawing />
          </div>
        </div>
        <div className="flex w-[19px] shrink-0 flex-col bg-[#f0f0f0] pr-[2px]">
          <ScrollButton label="Page up" d="M1 6l3.500-3.500L8 6" />
          <div className="grow-[131] basis-0" />
          <div className="mx-px grow-[449] basis-0 bg-[#cdcdcd]" />
          <div className="grow-[153] basis-0" />
          <ScrollButton label="Page down" d="M1 3l3.500 3.500L8 3" />
        </div>
      </div>
      <div className="flex h-[18px] shrink-0 bg-[#f0f0f0] py-px pr-[18px]">
        <ScrollButton label="Page left" d="M6 1L2.500 4.500 6 8" />
        <div className="grow-[280] basis-0" />
        <div className="mb-px grow-[604] basis-0 bg-[#cdcdcd]" />
        <div className="grow-[295] basis-0" />
        <ScrollButton label="Page right" d="M3 1l3.500 3.500L3 8" />
      </div>
    </main>
  )
}

const menus = ['File', 'Edit', 'View', 'Insert', 'Format', 'Tools', 'Shape', 'Window', 'Help']

const pageButtons = [
  { label: 'Minimize page', d: 'M4 10h6' },
  { label: 'Restore page', d: 'M3 7h5v4H3zM6 6V4h5v4H9' },
  { label: 'Close page', d: 'M4 4l6 6M10 4l-6 6' },
]

export default function App() {
  return (
    <div className="flex h-screen flex-col overflow-hidden border-x border-b border-black bg-[#f0f0f0] font-['Roboto',sans-serif] text-black">
      <header className="flex h-[25px] shrink-0 items-center bg-black pl-1 text-white">
        <svg width="16" height="16" viewBox="0 0 16 16" className="mr-[5px] bg-[#000050]" aria-hidden="true">
          <g fill="#30e060">
            <circle cx="4" cy="4" r="3" />
            <path d="M9 1h6v6H9zM4 8l4 4-4 4-4-4zM12 9l4 6H8z" />
          </g>
        </svg>
        <h1 className="flex-1 font-['DejaVu_Sans_Mono',monospace] text-[13px] leading-5">
          Visio Professional - [БСА прозвонки с рамкой.vsd:Page-1]
        </h1>
        <div className="flex">
          <button type="button" aria-label="Minimize" className="flex w-[41px] justify-center">
            <svg width="11" height="11" shapeRendering="crispEdges"><path d="M0 5.500h11" stroke="#fff" /></svg>
          </button>
          <button type="button" aria-label="Maximize" className="flex w-[41px] justify-center">
            <svg width="11" height="11" shapeRendering="crispEdges"><path d="M.5 .5h10v10H.5z" fill="none" stroke="#fff" /></svg>
          </button>
          <button type="button" aria-label="Close" className="flex w-[41px] justify-center">
            <svg width="11" height="11"><path d="M.5 .5l10 10M10.500 .5l-10 10" stroke="#fff" /></svg>
          </button>
        </div>
      </header>

      <nav className="flex h-5 shrink-0 items-center bg-white pl-2 font-['Open_Sans',sans-serif] text-[12px] leading-5">
        <svg width="14" height="14" viewBox="0 0 14 14" className="mr-[2px]" shapeRendering="crispEdges" aria-hidden="true">
          <path d="M1.500 .5h8l3 3v10h-11z" fill="#e8fff0" stroke="#208040" />
          <path d="M4 5h2v2H4zM8 5h2v2H8zM4 9h2v2H4zM8 9h2v2H8z" fill="#30b060" />
        </svg>
        {menus.map((m) => (
          <button key={m} type="button" className="px-[6px]">{m}</button>
        ))}
        <div className="ml-auto flex gap-[3px] pr-[2px]">
          {pageButtons.map(({ label, d }) => (
            <button key={label} type="button" aria-label={label} className="h-[17px] w-[17px] border border-[#e4e4e4] bg-[#fcfcfc]">
              <svg width="15" height="15" fill="none" stroke="#70757c" strokeWidth="2" aria-hidden="true">
                <path d={d} strokeWidth={label === 'Restore page' ? 1 : 2} />
              </svg>
            </button>
          ))}
        </div>
      </nav>

      <div className="flex shrink-0 flex-col border-b border-[#707070] pb-px shadow-[inset_0_1px_0_#a0a0a0]">
        <StandardRow />
        <TextRow />
        <ShapeRow />
      </div>

      <div className="flex min-h-0 flex-1 gap-[7px] pl-px">
        <StencilPanel />
        <Workspace />
      </div>

      <footer className="flex h-[26px] shrink-0 items-stretch border-t border-white pt-[2px] pl-px text-[12px]">
        <div className="w-[624px] border-t border-l border-[#a0a0a0] border-r border-r-white" />
        <div className="flex-1" />
        <div className="w-24 border-t border-l border-[#a0a0a0] border-r border-r-white" />
        <output className="w-[47px] pt-[2px] pl-[11px] text-[11px] leading-4">Status:</output>
        <div className="w-[54px] border-t border-l border-[#a0a0a0] border-r border-r-white" />
        <svg width="15" height="23" viewBox="0 0 15 23" aria-hidden="true">
          <path d="M2 23L15 10M6 23L15 14M10 23L15 18" stroke="#a0a0a0" strokeWidth="2" />
        </svg>
      </footer>
    </div>
  )
}
